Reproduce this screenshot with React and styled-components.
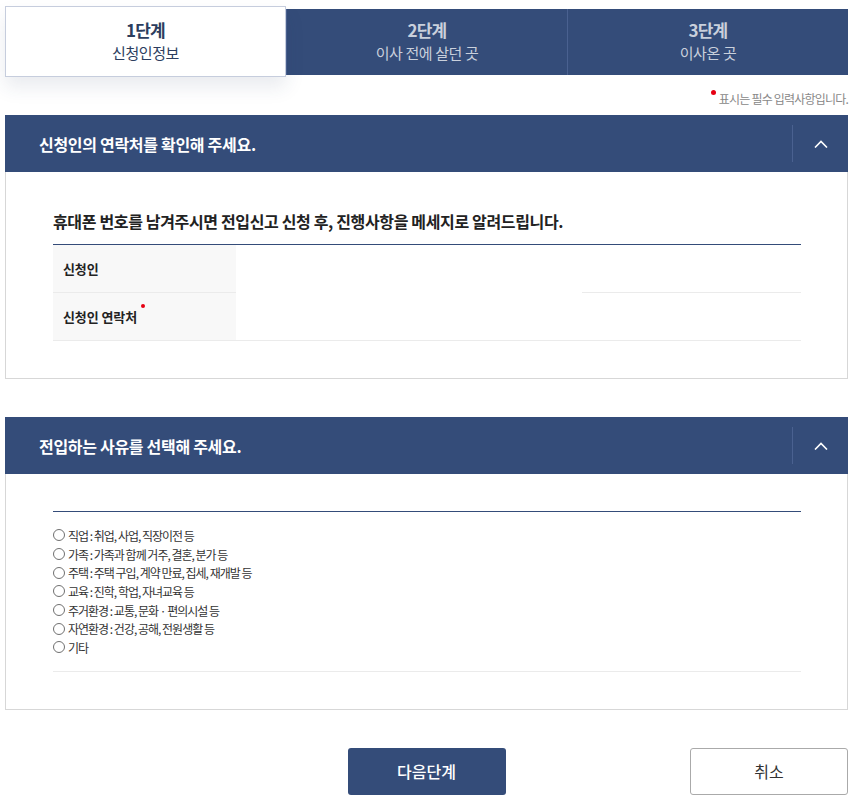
import React, { useState } from 'react';
import styled, { createGlobalStyle } from 'styled-components';

const NAVY = '#344c79';

const GlobalStyle = createGlobalStyle`
  html, body {
    margin: 0;
    padding: 0;
    background: #fff;
  }
  body {
    font-family: "Noto Sans CJK KR", "Noto Sans", sans-serif;
    color: #333;
  }
  * {
    box-sizing: border-box;
  }
`;

const STEPS = [
  { no: '1단계', name: '신청인정보' },
  { no: '2단계', name: '이사 전에 살던 곳' },
  { no: '3단계', name: '이사온 곳' },
];

const REASONS = [
  '직업 : 취업, 사업, 직장이전 등',
  '가족 : 가족과 함께 거주, 결혼, 분가 등',
  '주택 : 주택 구입, 계약 만료, 집세, 재개발 등',
  '교육 : 진학, 학업, 자녀교육 등',
  '주거환경 : 교통, 문화 · 편의시설 등',
  '자연환경 : 건강, 공해, 전원생활 등',
  '기타',
];

const Chevron = () => (
  <svg width="14" height="8" viewBox="0 0 14 8" fill="none">
    <polyline points="1,7.5 7,1.5 13,7.5" stroke="#fff" strokeWidth="1.6" />
  </svg>
);

const Panel = ({ title, children }) => {
  const [open, setOpen] = useState(true);
  return (
    <PanelBox>
      <PanelHeader>
        <PanelTitle>{title}</PanelTitle>
        <Toggle type="button" onClick={() => setOpen(prev => !prev)}>
          <Chevron />
        </Toggle>
      </PanelHeader>
      {open && <PanelBody>{children}</PanelBody>}
    </PanelBox>
  );
};

const App = () => {
  const [reason, setReason] = useState('');

  return (
    <Page>
      <GlobalStyle />
      <Steps>
        {STEPS.map((step, idx) => (
          <Step key={step.no} active={idx === 0}>
            <StepNo>{step.no}</StepNo>
            <StepName>{step.name}</StepName>
          </Step>
        ))}
      </Steps>

      <Notice>
        <Dot /> 표시는 필수 입력사항입니다.
      </Notice>

      <Panel title="신청인의 연락처를 확인해 주세요.">
        <Intro>휴대폰 번호를 남겨주시면 전입신고 신청 후, 진행사항을 메세지로 알려드립니다.</Intro>
        <Table>
          <Label>신청인</Label>
          <Value />
          <Rest bordered />
          <Label>
            신청인 연락처
            <Dot />
          </Label>
          <Value bordered />
          <Rest bordered />
        </Table>
      </Panel>

      <Gap />

      <Panel title="전입하는 사유를 선택해 주세요.">
        <Intro empty />
        <ReasonList>
          {REASONS.map(text => (
            <ReasonItem key={text}>
              <Radio
                type="radio"
                name="reason"
                checked={reason === text}
                onChange={() => setReason(text)}
              />
              {text}
            </ReasonItem>
          ))}
        </ReasonList>
      </Panel>

      <Buttons>
        <NextButton type="button">다음단계</NextButton>
        <CancelButton type="button">취소</CancelButton>
      </Buttons>
    </Page>
  );
};

export default App;

const Page = styled.div`
  width: 867px;
  padding: 6px 19px 8px 5px;
`;

const Steps = styled.div`
  display: grid;
  grid-template-columns: repeat(3, 1fr);
  align-items: center;
  height: 71px;
`;

const Step = styled.div`
  display: flex;
  flex-direction: column;
  align-items: center;
  justify-content: center;
  height: ${({ active }) => (active ? '71px' : '66px')};
  background: ${({ active }) => (active ? '#fff' : NAVY)};
  border: ${({ active }) => (active ? '1px solid #c6cddd' : 'none')};
  box-shadow: ${({ active }) => (active ? '0 10px 18px rgba(40, 60, 100, 0.1)' : 'none')};
  color: ${({ active }) => (active ? '#2c3d5e' : '#c9d0dc')};
  position: relative;
  z-index: ${({ active }) => (active ? 1 : 0)};

  & + & {
    border-left: 1px solid #4a6190;
  }
`;

const StepNo = styled.div`
  font-size: 17px;
  font-weight: 700;
  letter-spacing: -0.8px;
  line-height: 22px;
`;

const StepName = styled.div`
  font-size: 15px;
  letter-spacing: -0.4px;
  line-height: 22px;
  margin-top: 1px;
`;

const Notice = styled.div`
  display: flex;
  justify-content: flex-end;
  align-items: flex-start;
  gap: 3px;
  height: 38px;
  padding-top: 14px;
  font-size: 12px;
  letter-spacing: -0.8px;
  line-height: 16px;
  color: #888;
`;

const Dot = styled.span`
  display: inline-block;
  width: 5px;
  height: 5px;
  margin-top: -1px;
  border-radius: 50%;
  background: #e60012;
  vertical-align: top;
`;

const PanelBox = styled.section`
  border: 1px solid #d7d7d7;
  border-top: none;
`;

const PanelHeader = styled.div`
  display: flex;
  align-items: center;
  height: 57px;
  margin: 0 -1px;
  background: ${NAVY};
`;

const PanelTitle = styled.h2`
  flex: 1;
  margin: 0;
  padding-left: 34px;
  font-size: 16px;
  font-weight: 700;
  letter-spacing: -0.3px;
  color: #fff;
`;

const Toggle = styled.button`
  display: flex;
  align-items: center;
  justify-content: center;
  width: 56px;
  height: 37px;
  padding: 0;
  border: none;
  border-left: 1px solid #4a6190;
  background: transparent;
  cursor: pointer;
`;

const PanelBody = styled.div`
  padding: 37px 46px 37px 47px;
`;

const Intro = styled.h3`
  margin: 0;
  height: ${({ empty }) => (empty ? '1px' : '36px')};
  padding-bottom: ${({ empty }) => (empty ? '0' : '11px')};
  border-bottom: 1px solid ${NAVY};
  font-size: 16px;
  font-weight: 700;
  letter-spacing: -0.35px;
  line-height: 24px;
  color: #222;
`;

const Table = styled.div`
  display: grid;
  grid-template-columns: 183px 346px 1fr;
  grid-auto-rows: 48px;
`;

const Label = styled.div`
  display: flex;
  align-items: center;
  padding-left: 10px;
  background: #f8f8f8;
  border-bottom: 1px solid #ebebeb;
  font-size: 13px;
  font-weight: 700;
  letter-spacing: -0.1px;
  color: #222;

  ${Dot} {
    align-self: flex-start;
    margin: 11px 0 0 4px;
    width: 4px;
    height: 4px;
  }
`;

const Value = styled.div`
  background: #fff;
  border-bottom: 1px solid ${({ bordered }) => (bordered ? '#ebebeb' : '#fff')};
`;

const Rest = styled.div`
  border-bottom: 1px solid ${({ bordered }) => (bordered ? '#ebebeb' : '#fff')};
`;

const ReasonList = styled.ul`
  list-style: none;
  margin: 0;
  padding: 14px 0;
  border-bottom: 1px solid #ebebeb;
`;

const ReasonItem = styled.li`
  display: flex;
  align-items: center;
  gap: 3px;
  height: 18.7px;
  font-size: 12px;
  letter-spacing: -1px;
  color: #333;
`;

const Radio = styled.input`
  appearance: none;
  flex: none;
  width: 12px;
  height: 12px;
  margin: 0;
  border: 1px solid #707070;
  border-radius: 50%;
  background: #fff;

  &:checked {
    background: radial-gradient(circle, #344c79 0 3px, #fff 3.5px);
  }
`;

const Gap = styled.div`
  height: 38px;
`;

const Buttons = styled.div`
  display: grid;
  grid-template-columns: 1fr 158px 1fr;
  align-items: center;
  margin-top: 38px;
`;

const NextButton = styled.button`
  grid-column: 2;
  height: 47px;
  border: none;
  border-radius: 3px;
  background: ${NAVY};
  font-family: inherit;
  font-size: 16px;
  font-weight: 500;
  color: #fff;
  cursor: pointer;
`;

const CancelButton = styled.button`
  grid-column: 3;
  justify-self: end;
  width: 158px;
  height: 47px;
  border: 1px solid #aaa;
  border-radius: 3px;
  background: #fff;
  font-family: inherit;
  font-size: 16px;
  color: #333;
  cursor: pointer;
`;
